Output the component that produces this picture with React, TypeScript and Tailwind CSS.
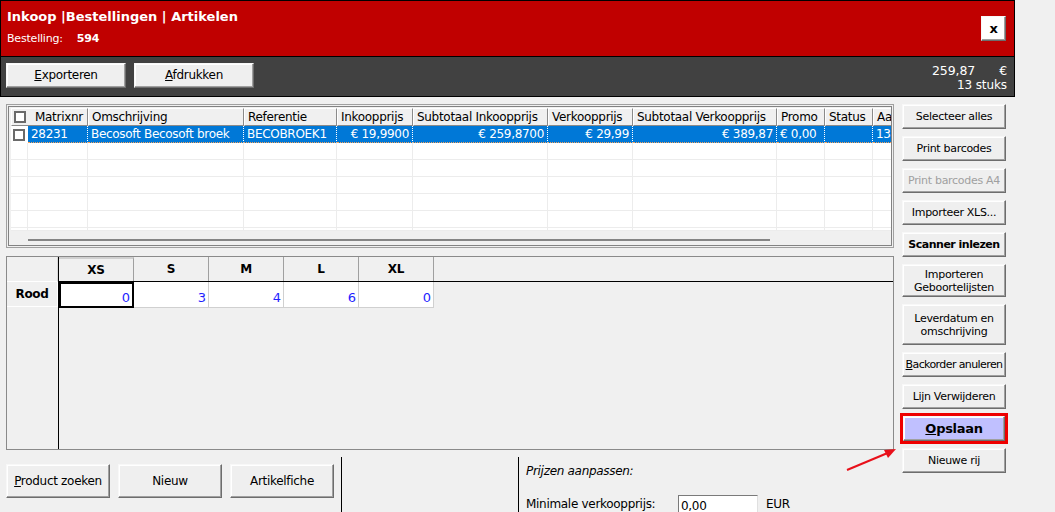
import React from "react";

const font = { fontFamily: '"DejaVu Sans", Verdana, sans-serif' };

const btn =
  "flex items-center justify-center whitespace-nowrap bg-[#efefef] border border-t-[#f8f8f8] border-l-[#f8f8f8] border-r-[#6d6d6d] border-b-[#6d6d6d] shadow-[inset_-1px_-1px_0_#a0a0a0,inset_1px_1px_0_#ffffff] text-[11px] tracking-[-0.3px] leading-[13px] text-center";

function Btn({ children, className = "" }: { children: React.ReactNode; className?: string }) {
  return <div className={`${btn} ${className}`}>{children}</div>;
}

const columns = [
  { label: "", w: "w-[17px]" },
  { label: "Matrixnr", w: "w-[60px]" },
  { label: "Omschrijving", w: "w-[156px]" },
  { label: "Referentie", w: "w-[93px]" },
  { label: "Inkoopprijs", w: "w-[76px]" },
  { label: "Subtotaal Inkoopprijs", w: "w-[135px]" },
  { label: "Verkoopprijs", w: "w-[85px]" },
  { label: "Subtotaal Verkoopprijs", w: "w-[144px]" },
  { label: "Promo", w: "w-[48px]" },
  { label: "Status", w: "w-[48px]" },
  { label: "Aa", w: "w-[20px]" },
];

const row = [
  { v: "28231", align: "text-left" },
  { v: "Becosoft Becosoft broek", align: "text-left" },
  { v: "BECOBROEK1", align: "text-left" },
  { v: "€ 19,9900", align: "text-right" },
  { v: "€ 259,8700", align: "text-right" },
  { v: "€ 29,99", align: "text-right" },
  { v: "€ 389,87", align: "text-right" },
  { v: "€ 0,00", align: "text-left" },
  { v: "", align: "text-left" },
  { v: "13", align: "text-left" },
];

function Checkbox() {
  return <div className="h-[12px] w-[12px] border-2 border-[#6a6a6a] bg-white" />;
}

function OrderGrid() {
  return (
    <div className="h-[144px] w-[888px] border border-[#a0a0a0] p-[1px]">
      <div className="flex h-full flex-col border border-[#828282] bg-[#f0f0f0] pl-[2px] pt-[1px] overflow-hidden">
        {/* header */}
        <div className="flex h-[18px] text-[12px] tracking-[-0.3px] leading-[16px]">
          <div className="flex w-[77px] shrink-0 items-center gap-[9px] border border-t-[#ffffff] border-l-[#ffffff] border-r-[#8a8a8a] border-b-[#8a8a8a] bg-[#f0f0f0] pl-[2px]">
            <Checkbox />
            <span>Matrixnr</span>
          </div>
          {columns.slice(2).map((c) => (
            <div key={c.label} className={`${c.w} shrink-0 overflow-hidden whitespace-nowrap border border-t-[#ffffff] border-l-[#ffffff] border-r-[#8a8a8a] border-b-[#8a8a8a] bg-[#f0f0f0] px-[3px]`}>
              {c.label}
            </div>
          ))}
        </div>
        {/* data row */}
        <div className="flex h-[17px] bg-white text-[12px] tracking-[-0.3px] leading-[16px]">
          <div className="flex w-[17px] shrink-0 items-center pl-[2px]">
            <Checkbox />
          </div>
          {columns.slice(1).map((c, i) => (
            <div key={c.label} className={`${c.w} ${row[i].align} shrink-0 overflow-hidden whitespace-nowrap border-r border-white border-b border-b-[#f5a25a] border-dotted bg-[#0078d7] px-[3px] text-white`}>
              {row[i].v}
            </div>
          ))}
        </div>
        {[0, 1, 2, 3, 4, 5].map((r) => (
          <div key={r} className={`flex ${r === 5 ? "h-[3px]" : "h-[17px]"} bg-white`}>
            {columns.map((c, i) => (
              <div key={i} className={`${c.w} shrink-0 border-b border-r border-[#ececec]`} />
            ))}
          </div>
        ))}
        <div className="flex-1 pl-[17px] pt-[8px]">
          <div className="h-[2px] w-[742px] bg-[#858585]" />
        </div>
      </div>
    </div>
  );
}

const sizes = [
  { s: "XS", v: "0" },
  { s: "S", v: "3" },
  { s: "M", v: "4" },
  { s: "L", v: "6" },
  { s: "XL", v: "0" },
];

function SizeGrid() {
  return (
    <div className="mt-[8px] flex h-[194px] w-[888px] border border-[#8a8a8a] bg-[#f0f0f0]">
      <div className="w-[52px] shrink-0 border-r border-black">
        <div className="h-[25px] border-b border-r border-b-[#ffffff] border-r-[#d8d8d8]" />
        <div className="flex h-[25px] items-center justify-center border-b border-r border-[#ffffff] text-[12px] font-bold tracking-[-0.3px]">
          Rood
        </div>
      </div>
      <div className="flex-1">
        <div className="flex h-[25px] border-b border-black text-[12px] font-bold tracking-[-0.3px]">
          {sizes.map((s, i) => (
            <div key={s.s} className={`flex w-[75px] items-center justify-center border-r border-[#a0a0a0] ${i === 0 ? "border-t-2 border-t-[#d0d0d0]" : ""}`}>
              {s.s}
            </div>
          ))}
        </div>
        <div className="flex h-[26px]">
          {sizes.map((s, i) => (
            <div
              key={s.s}
              className={`flex w-[75px] items-end justify-end bg-white pr-[2px] text-[13px] leading-[15px] text-[#1f1fff] ${
                i === 0 ? "border-2 border-black pb-[1px]" : "border-b border-r border-[#d0d0d0] pb-[2px]"
              }`}
            >
              {s.v}
            </div>
          ))}
        </div>
      </div>
    </div>
  );
}

const sideButtons: { label: React.ReactNode; h: string; className?: string }[] = [
  { label: "Selecteer alles", h: "h-[25px]" },
  { label: "Print barcodes", h: "h-[25px]" },
  { label: "Print barcodes A4", h: "h-[25px]", className: "text-[#a0a0a0]" },
  { label: "Importeer XLS...", h: "h-[25px]" },
  { label: "Scanner inlezen", h: "h-[25px]", className: "font-bold tracking-[-0.5px]" },
  { label: <>Importeren<br />Geboortelijsten</>, h: "h-[33px]" },
  { label: <>Leverdatum en<br />omschrijving</>, h: "h-[41px]" },
  { label: <><u>B</u>ackorder anuleren</>, h: "h-[25px]", className: "tracking-[-0.6px]" },
  { label: "Lijn Verwijderen", h: "h-[25px]" },
];

export default function App() {
  return (
    <div className="relative h-[512px] w-[1055px] overflow-hidden bg-[#f0f0f0] text-black" style={font}>
      {/* top header */}
      <div className="w-[1015px] border border-black">
        <div className="relative h-[55px] bg-[#c00000] px-[6px] pt-[7px] text-white">
          <div className="text-[13px] font-bold leading-[18px] tracking-[0px]">Inkoop |Bestellingen | Artikelen</div>
          <div className="mt-[5px] flex text-[11px] leading-[16px] tracking-[-0.2px]">
            <span>Bestelling:</span>
            <span className="ml-[14px] font-bold">594</span>
          </div>
          <div className="absolute right-[8px] top-[15px]">
            <Btn className="h-[25px] w-[25px] !bg-white text-[13px] font-bold text-black">x</Btn>
          </div>
        </div>
        <div className="flex h-[40px] items-start justify-between border-t border-black bg-[#414141] pl-[5px] pr-[7px] pt-[6px]">
          <div className="flex gap-[8px]">
            <Btn className="h-[25px] w-[120px] text-[12px]"><span><u>E</u>xporteren</span></Btn>
            <Btn className="h-[25px] w-[120px] text-[12px]"><span><u>A</u>fdrukken</span></Btn>
          </div>
          <div className="flex flex-col items-end text-[12.5px] leading-[15px] tracking-[-0.1px] text-white">
            <div className="flex gap-[24px]">
              <span>259,87</span>
              <span>€</span>
            </div>
            <span className="text-[12px]">13 stuks</span>
          </div>
        </div>
      </div>

      {/* body */}
      <div className="flex pl-[6px] pt-[7px]">
        <div className="flex w-[888px] flex-col">
          <OrderGrid />
          <SizeGrid />
          <div className="flex">
            <div className="flex gap-[8px] pt-[14px]">
              <Btn className="h-[34px] w-[104px] text-[12px]"><span><u>P</u>roduct zoeken</span></Btn>
              <Btn className="h-[34px] w-[104px] text-[12px]">Nieuw</Btn>
              <Btn className="h-[34px] w-[104px] text-[12px]">Artikelfiche</Btn>
            </div>
            <div className="ml-[7px] mt-[7px] h-[60px] w-[1px] bg-black" />
            <div className="ml-[176px] mt-[7px] h-[60px] w-[1px] bg-black" />
            <div className="pl-[7px] pt-[14px] text-[12px] tracking-[-0.3px]">
              <div className="italic leading-[14px]">Prijzen aanpassen:</div>
              <div className="mt-[17px] flex items-start">
                <span className="w-[152px] pt-[2px] leading-[14px]">Minimale verkoopprijs:</span>
                <div className="h-[20px] w-[80px] border border-t-[#7a7a7a] border-l-[#7a7a7a] border-r-[#e0e0e0] border-b-[#e0e0e0] bg-white pl-[2px] pt-[3px] leading-[14px]">0,00</div>
                <span className="ml-[8px] pt-[2px] leading-[14px]">EUR</span>
              </div>
            </div>
          </div>
        </div>

        <div className="ml-[8px] flex w-[104px] flex-col gap-[7px]">
          {sideButtons.map((b, i) => (
            <Btn key={i} className={`${b.h} ${b.className ?? ""}`}>
              <span>{b.label}</span>
            </Btn>
          ))}
          <div className="-mx-[2px] -my-[3px] border-[3px] border-[#ee0000] p-0">
            <Btn className="h-[25px] !bg-[#c0c0ff] text-[13px] font-bold">
              <span><u>O</u>pslaan</span>
            </Btn>
          </div>
          <Btn className="h-[25px]">Nieuwe rij</Btn>
        </div>
      </div>

      {/* red arrow annotation */}
      <svg className="absolute left-[840px] top-[440px]" width="60" height="40" viewBox="0 0 60 40">
        <line x1="7" y1="30" x2="50" y2="12" stroke="#e8101a" strokeWidth="2" />
        <polygon points="56,9 44,10 48,18" fill="#e8101a" />
      </svg>
    </div>
  );
}
